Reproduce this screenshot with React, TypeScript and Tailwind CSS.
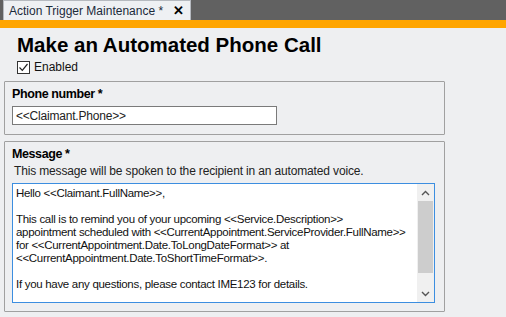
import React from "react";

export default function App() {
  const ui = { fontFamily: '"Liberation Sans", Arial, sans-serif' };
  return (
    <div className="w-[506px] h-[317px] overflow-hidden bg-[#eeeff1] flex flex-col" style={ui}>
      {/* tab bar */}
      <div className="h-[20px] bg-[#616161] flex items-end pl-[3px] shrink-0">
        <div className="h-[20px] w-[188px] bg-[#eef0f3] border-l border-t border-r border-[#b5b9bf] flex items-center pl-[5px] pr-[6px] justify-between">
          <span className="text-[12px] text-[#1b2a3a] leading-none whitespace-nowrap">Action Trigger Maintenance *</span>
          <span className="text-[13px] font-bold leading-none text-black">✕</span>
        </div>
      </div>
      <div className="h-[8px] bg-[#ffa500] shrink-0" />
      <div className="flex flex-col pl-[4px] w-[445px]">
        <div className="pl-[13px] pt-[5px] text-[20.5px] font-bold leading-[24px] text-black">
          Make an Automated Phone Call
        </div>
        <div className="pl-[13px] mt-[3px] flex items-center gap-[4px] h-[14px]">
          <div className="w-[13px] h-[13px] border border-[#333] bg-white flex items-center justify-center">
            <svg width="11" height="11" viewBox="0 0 11 11">
              <path d="M1.5 5.5 L4.3 8.3 L9.5 2" fill="none" stroke="#222" strokeWidth="1.2" />
            </svg>
          </div>
          <span className="text-[12px] text-[#111] leading-none">Enabled</span>
        </div>
        {/* phone group */}
        <div className="mt-[7px] h-[54px] border border-[#a0a0a0] rounded-[1px] pl-[7px] pt-[5px]">
          <div className="text-[12.5px] font-bold text-black leading-[14px] tracking-[-0.4px]">Phone number *</div>
          <div className="mt-[5px] w-[265px] h-[19px] bg-white border border-[#7a7a7a] flex items-center pl-[3px] text-[12px] text-[#222] leading-none tracking-[-0.2px]">
            &lt;&lt;Claimant.Phone&gt;&gt;
          </div>
        </div>
        {/* message group */}
        <div className="mt-[6px] h-[171px] border border-[#a0a0a0] rounded-[1px] pl-[7px] pt-[5px]">
          <div className="text-[12.5px] font-bold text-black leading-[15px] tracking-[-0.4px]">Message *</div>
          <div className="text-[12px] text-[#222] leading-[15px] mt-[2px] pl-[2px] tracking-[-0.15px]">
            This message will be spoken to the recipient in an automated voice.
          </div>
          <div className="mt-[4px] w-[423px] h-[120px] bg-white border border-[#3c8ee0] flex">
            <div className="flex-1 pl-[3px] pt-[3px] text-[11.5px] leading-[13px] text-[#111] whitespace-pre tracking-[-0.3px]">
{`Hello <<Claimant.FullName>>,

This call is to remind you of your upcoming <<Service.Description>>
appointment scheduled with <<CurrentAppointment.ServiceProvider.FullName>>
for <<CurrentAppointment.Date.ToLongDateFormat>> at
<<CurrentAppointment.Date.ToShortTimeFormat>>.

If you have any questions, please contact IME123 for details.`}
            </div>
            <div className="w-[17px] bg-[#f0f0f0] flex flex-col items-center">
              <div className="h-[17px] flex items-center justify-center">
                <svg width="9" height="6" viewBox="0 0 9 6"><path d="M1 5 L4.5 1.5 L8 5" fill="none" stroke="#555" strokeWidth="1.4" /></svg>
              </div>
              <div className="w-[15px] h-[72px] bg-[#cdcdcd]" />
              <div className="flex-1" />
              <div className="h-[17px] flex items-center justify-center">
                <svg width="9" height="6" viewBox="0 0 9 6"><path d="M1 1 L4.5 4.5 L8 1" fill="none" stroke="#555" strokeWidth="1.4" /></svg>
              </div>
            </div>
          </div>
        </div>
      </div>
    </div>
  );
}
